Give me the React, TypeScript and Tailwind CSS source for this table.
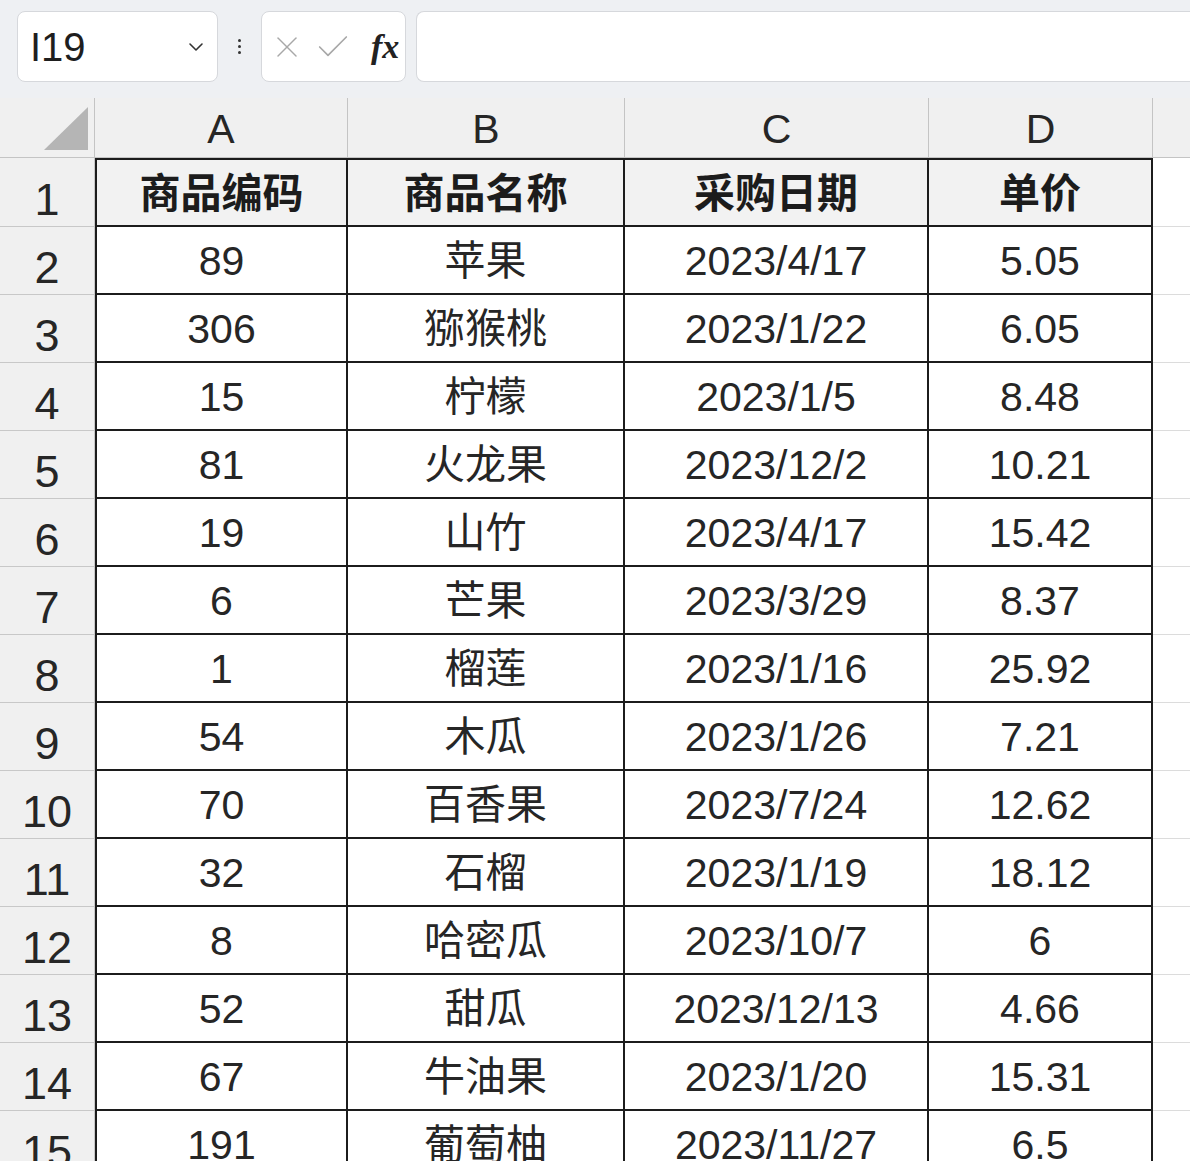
import { ChevronDown, X, Check } from "lucide-react";

const rows = [
  ["89", "苹果", "2023/4/17", "5.05"],
  ["306", "猕猴桃", "2023/1/22", "6.05"],
  ["15", "柠檬", "2023/1/5", "8.48"],
  ["81", "火龙果", "2023/12/2", "10.21"],
  ["19", "山竹", "2023/4/17", "15.42"],
  ["6", "芒果", "2023/3/29", "8.37"],
  ["1", "榴莲", "2023/1/16", "25.92"],
  ["54", "木瓜", "2023/1/26", "7.21"],
  ["70", "百香果", "2023/7/24", "12.62"],
  ["32", "石榴", "2023/1/19", "18.12"],
  ["8", "哈密瓜", "2023/10/7", "6"],
  ["52", "甜瓜", "2023/12/13", "4.66"],
  ["67", "牛油果", "2023/1/20", "15.31"],
  ["191", "葡萄柚", "2023/11/27", "6.5"],
];

const widths = ["w-[253px]", "w-[277px]", "w-[304px]", "w-[224px]"];

function FormulaBar() {
  return (
    <div className="flex h-[98px] items-start bg-[#eef0f3] pt-[11px] pl-[17px]">
      {/* Name box */}
      <div className="flex h-[71px] w-[201px] items-center justify-between rounded-lg border border-[#d6d8dc] bg-white pl-[12px] pr-[9px]">
        <span className="text-[40px] text-[#1e1e1e]">I19</span>
        <ChevronDown className="h-6 w-6 text-[#333]" strokeWidth={1.6} />
      </div>
      <div className="flex h-[71px] w-[43px] flex-col items-center justify-center gap-[3px]">
        <span className="h-[3px] w-[3px] rounded-full bg-[#333]" />
        <span className="h-[3px] w-[3px] rounded-full bg-[#333]" />
        <span className="h-[3px] w-[3px] rounded-full bg-[#333]" />
      </div>
      <div className="flex h-[71px] w-[145px] items-center rounded-lg border border-[#d6d8dc] bg-white pl-[7px]">
        <X className="h-[36px] w-[36px] text-[#a8a8a8]" strokeWidth={1} />
        <Check className="ml-[8px] h-[40px] w-[40px] text-[#a8a8a8]" strokeWidth={1} />
        <span className="ml-[18px] font-['Liberation_Serif'] text-[34px] italic font-semibold text-[#222]">
          fx
        </span>
      </div>
      <div className="ml-[10px] h-[71px] flex-1 rounded-l-lg border border-r-0 border-[#d6d8dc] bg-white" />
    </div>
  );
}

export default function App() {
  return (
    <div className="h-[1161px] w-[1190px] overflow-hidden bg-white font-['Liberation_Sans','Noto_Sans_CJK_SC',sans-serif] text-[#262626]">
      <FormulaBar />

      {/* Column headers */}
      <div className="flex h-[60px] border-b border-[#c4c4c4] bg-[#f0f0f0]">
        <div className="relative w-[95px] border-r border-[#c4c4c4]">
          <svg className="absolute left-0 top-0" width="95" height="60">
            <polygon points="44,52 88,52 88,9" fill="#b5b5b5" />
          </svg>
        </div>
        {["A", "B", "C", "D"].map((c, i) => (
          <div
            key={c}
            className={`${widths[i]} flex items-center justify-center border-r border-[#c4c4c4] pt-[4px] text-[41px] text-[#262626]`}
          >
            {c}
          </div>
        ))}
        <div className="flex-1" />
      </div>

      {/* Row 1 */}
      <div className="flex h-[69px]">
        <div className="flex w-[95px] items-end justify-center border-r border-b border-[#c8c8c8] bg-[#f0f0f0] pb-[4px] text-[45px] leading-none">
          1
        </div>
        {["商品编码", "商品名称", "采购日期", "单价"].map((t, i) => (
          <div
            key={t}
            className={`${widths[i]} flex items-center justify-center border-t-2 border-r-2 border-b-2 border-[#1c1c1c] bg-[#f2f2f2] pt-[4px] text-[41px] font-bold text-[#1c1c1c] ${
              i === 0 ? "border-l-2" : ""
            }`}
          >
            {t}
          </div>
        ))}
        <div className="flex-1 border-b border-[#dcdcdc]" />
      </div>

      {rows.map((r, ri) => (
        <div key={ri} className="flex h-[68px]">
          <div className="flex w-[95px] items-end justify-center border-r border-b border-[#c8c8c8] bg-[#f0f0f0] pb-[4px] text-[45px] leading-none">
            {ri + 2}
          </div>
          {r.map((v, i) => (
            <div
              key={i}
              className={`${widths[i]} flex items-center justify-center border-r-2 border-b-2 border-[#1c1c1c] pt-[4px] text-[41px] ${
                i === 0 ? "border-l-2" : ""
              }`}
            >
              {v}
            </div>
          ))}
          <div className="flex-1 border-b border-[#dcdcdc]" />
        </div>
      ))}
    </div>
  );
}
